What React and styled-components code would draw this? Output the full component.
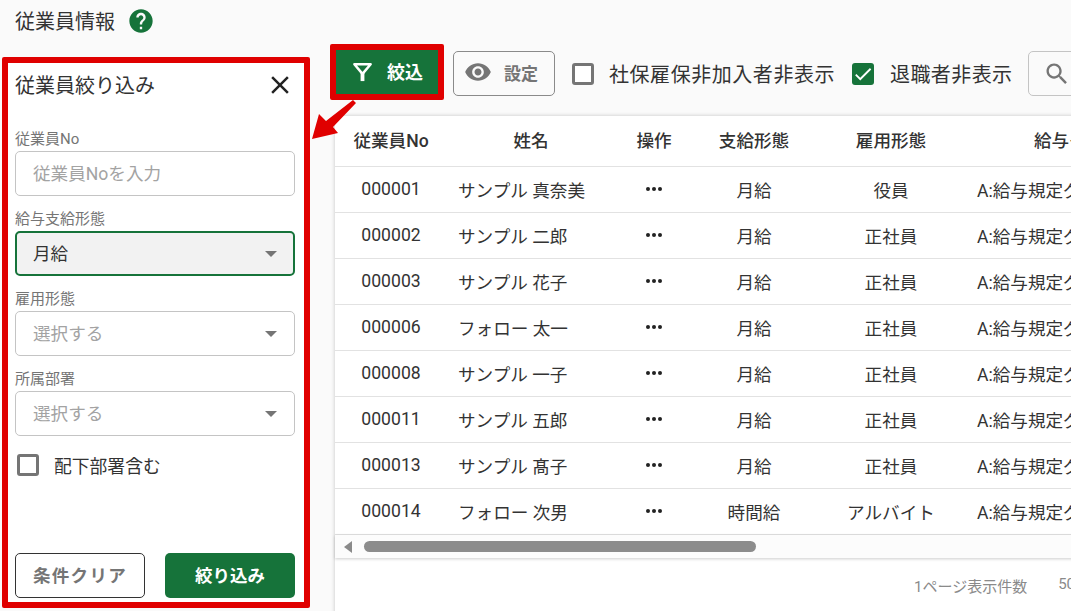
import React from "react";
import styled, { createGlobalStyle } from "styled-components";

const Global = createGlobalStyle`
  html, body { margin: 0; padding: 0; height: 611px; overflow: hidden; background: #fafafa; }
  * { box-sizing: border-box; }
  body { font-family: Roboto, "Noto Sans CJK JP", sans-serif; color: #333; }
`;

const GREEN = "#16733a";
const RED = "#e00000";

const Page = styled.div`
  position: relative;
  width: 1071px;
  height: 611px;
  overflow: hidden;
`;
const Header = styled.header`
  height: 44px;
  padding: 0 0 3px 15px;
  display: flex;
  align-items: center;
  gap: 12px;
`;
const Title = styled.h1`
  margin: 0;
  font-size: 20px;
  font-weight: 400;
  color: #333;
`;
const HelpMark = styled.span`
  color: ${GREEN};
  display: flex;
`;
const Body = styled.div`
  display: flex;
  align-items: flex-start;
  padding-left: 2px;
  width: 1400px;
`;
const Side = styled.aside`
  width: 308px;
  height: 551px;
  margin-top: 13px;
  border: 6px solid ${RED};
  border-radius: 2px;
  background: #fff;
  padding: 0 9px 4px 7px;
  display: flex;
  flex-direction: column;
`;
const SideHead = styled.div`
  height: 46px;
  padding-bottom: 3px;
  display: flex;
  align-items: center;
  justify-content: space-between;
  margin-bottom: 17px;
`;
const SideTitle = styled.h2`
  margin: 0;
  font-size: 20px;
  font-weight: 400;
  color: #333;
`;
const Close = styled.button`
  border: 0;
  background: none;
  padding: 0;
  width: 30px;
  height: 30px;
  color: #222;
  display: flex;
`;
const Field = styled.div`
  height: 80px;
  display: flex;
  flex-direction: column;
`;
const Label = styled.label`
  height: 25px;
  padding-top: 3px;
  font-size: 15px;
  line-height: 20px;
  color: #757575;
`;
const Box = styled.div`
  height: 45px;
  border: ${(p) => (p.$active ? `2px solid ${GREEN}` : "1px solid #c4c4c4")};
  border-radius: 5px;
  background: ${(p) => (p.$active ? "#f2f2f2" : "#fff")};
  padding: 0 ${(p) => (p.$active ? "16px" : "17px")} 2px ${(p) => (p.$active ? "16px" : "17px")};
  display: flex;
  align-items: center;
  justify-content: space-between;
  font-size: 17.6px;
  color: ${(p) => (p.$placeholder ? "#a3a3a3" : "#333")};
`;
const Caret = styled.span`
  width: 0;
  height: 0;
  margin-top: 2px;
  border-left: 6px solid transparent;
  border-right: 6px solid transparent;
  border-top: 6px solid #757575;
`;
const CheckRow = styled.label`
  display: flex;
  align-items: center;
  gap: ${(p) => p.$gap || 15}px;
  font-size: ${(p) => p.$size || 17.8}px;
  letter-spacing: ${(p) => p.$ls || 0}px;
  color: #333;
  white-space: nowrap;
`;
const Check = styled.span`
  width: 22px;
  height: 22px;
  flex: none;
  border-radius: 3px;
  border: ${(p) => (p.$on ? "0" : "3px solid #757575")};
  background: ${(p) => (p.$on ? GREEN : "#fff")};
  color: #fff;
  display: flex;
`;
const SideCheck = styled.div`
  margin-top: 6px;
  padding-left: 2px;
`;
const SideFoot = styled.div`
  margin-top: auto;
  display: flex;
  justify-content: space-between;
`;
const FootButton = styled.button`
  width: 130px;
  height: 45px;
  border-radius: 5px;
  border: ${(p) => (p.$primary ? "0" : "1px solid #333")};
  background: ${(p) => (p.$primary ? GREEN : "#fff")};
  color: ${(p) => (p.$primary ? "#fff" : "#757575")};
  font: 700 17.5px Roboto, "Noto Sans CJK JP", sans-serif;
  letter-spacing: ${(p) => (p.$primary ? 0 : 1.3)}px;
  padding: 0 0 2px;
`;
const Main = styled.main`
  flex: 1;
  margin-left: 20px;
  min-width: 0;
`;
const Toolbar = styled.div`
  height: 72px;
  display: flex;
  align-items: flex-start;
`;
const Highlight = styled.div`
  width: 114px;
  height: 56px;
  border: 6px solid ${RED};
  border-radius: 2px;
  margin-right: 9px;
`;
const FilterButton = styled.button`
  width: 102px;
  height: 44px;
  border: 0;
  background: ${GREEN};
  color: #fff;
  font: 700 18px Roboto, "Noto Sans CJK JP", sans-serif;
  display: flex;
  align-items: center;
  justify-content: center;
  gap: 13px;
  padding: 0 0 2px;
`;
const SettingButton = styled.button`
  width: 102px;
  height: 45px;
  margin: 7px 17px 0 0;
  border: 1px solid #8a8a8a;
  border-radius: 5px;
  background: #fafafa;
  color: #757575;
  font: 700 17px Roboto, "Noto Sans CJK JP", sans-serif;
  display: flex;
  align-items: center;
  justify-content: center;
  gap: 12px;
  padding: 0 6px 3px 0;
`;
const ToolCheck = styled.div`
  margin: 7px 17px 0 0;
  height: 45px;
  display: flex;
  align-items: center;
`;
const SearchBox = styled.div`
  width: 200px;
  height: 45px;
  margin: 7px 0 0 -1px;
  border: 1px solid #c4c4c4;
  border-radius: 5px;
  padding-left: 14px;
  background: #fafafa;
  color: #757575;
  display: flex;
  align-items: center;
`;
const Card = styled.section`
  margin-left: 5px;
  background: #fff;
  box-shadow: 0 0 4px rgba(0, 0, 0, 0.22);
  height: 520px;
`;
const Table = styled.div`
  display: grid;
  grid-template-columns: 112px 168px 78px 122px 152px 300px;
`;
const Cell = styled.div`
  height: ${(p) => (p.$head ? 51 : 46)}px;
  border-bottom: 1px solid #e2e2e2;
  display: flex;
  align-items: center;
  justify-content: ${(p) => (p.$left ? "flex-start" : "center")};
  padding: 0 0 ${(p) => (p.$head ? 3 : 1)}px ${(p) => p.$pad || 0}px;
  font-size: 17.6px;
  font-weight: ${(p) => (p.$head ? 500 : 400)};
  color: #333;
  white-space: nowrap;
  overflow: hidden;
`;
const Dots = styled.span`
  display: flex;
  gap: 2px;
  & i { width: 4px; height: 4px; border-radius: 50%; background: #222; display: block; }
`;
const ScrollTrack = styled.div`
  height: 23px;
  display: flex;
  align-items: center;
  padding: 0 0 0 9px;
  background: #fcfcfc;
  box-shadow: 0 1px 3px rgba(0, 0, 0, 0.2);
  position: relative;
`;
const ScrollArrow = styled.span`
  width: 0;
  height: 0;
  border-top: 6px solid transparent;
  border-bottom: 6px solid transparent;
  border-right: 8px solid #8a8a8a;
  margin-right: 12px;
`;
const ScrollThumb = styled.span`
  width: 392px;
  height: 11px;
  border-radius: 6px;
  background: #8c8c8c;
`;
const Footer = styled.div`
  height: 60px;
  padding: 17px 0 0 579px;
  display: flex;
  gap: 31px;
  font-size: 15px;
  color: #8a8a8a;
  white-space: nowrap;
`;
const Arrow = styled.svg`
  position: absolute;
  left: 310px;
  top: 98px;
  width: 48px;
  height: 44px;
`;

const Icon = ({ d, size = 24, fill = "currentColor" }) => (
  <svg width={size} height={size} viewBox="0 0 24 24" fill={fill}><path d={d} /></svg>
);

const rows = [
  ["000001", "サンプル 真奈美", "月給", "役員"],
  ["000002", "サンプル 二郎", "月給", "正社員"],
  ["000003", "サンプル 花子", "月給", "正社員"],
  ["000006", "フォロー 太一", "月給", "正社員"],
  ["000008", "サンプル 一子", "月給", "正社員"],
  ["000011", "サンプル 五郎", "月給", "正社員"],
  ["000013", "サンプル 髙子", "月給", "正社員"],
  ["000014", "フォロー 次男", "時間給", "アルバイト"],
];

const HELP = "M12 2C6.48 2 2 6.48 2 12s4.48 10 10 10 10-4.48 10-10S17.52 2 12 2zm1 17h-2v-2h2v2zm2.07-7.75l-.9.92C13.45 12.9 13 13.5 13 15h-2v-.5c0-1.1.45-2.1 1.17-2.83l1.24-1.26c.37-.36.59-.86.59-1.41 0-1.1-.9-2-2-2s-2 .9-2 2H8c0-2.21 1.79-4 4-4s4 1.79 4 4c0 .88-.36 1.68-.93 2.25z";
const CLOSE = "M19 6.41L17.59 5 12 10.59 6.41 5 5 6.41 10.59 12 5 17.59 6.41 19 12 13.41 17.59 19 19 17.59 13.41 12z";
const EYE = "M12 4.5C7 4.5 2.73 7.61 1 12c1.73 4.39 6 7.5 11 7.5s9.27-3.11 11-7.5c-1.73-4.39-6-7.5-11-7.5zM12 17c-2.76 0-5-2.24-5-5s2.24-5 5-5 5 2.24 5 5-2.24 5-5 5zm0-8c-1.66 0-3 1.34-3 3s1.34 3 3 3 3-1.34 3-3-1.34-3-3-3z";
const SEARCH = "M15.5 14h-.79l-.28-.27C15.41 12.59 16 11.11 16 9.5 16 5.91 13.09 3 9.5 3S3 5.91 3 9.5 5.91 16 9.5 16c1.61 0 3.09-.59 4.23-1.57l.27.28v.79l5 4.99L20.49 19l-4.99-5zm-6 0C7.01 14 5 11.99 5 9.5S7.01 5 9.5 5 14 7.01 14 9.5 11.99 14 9.5 14z";
const TICK = "M9 16.17L4.83 12l-1.42 1.41L9 19 21 7l-1.41-1.41z";

export default function App() {
  return (
    <Page>
      <Global />
      <Header>
        <Title>従業員情報</Title>
        <HelpMark><Icon d={HELP} size={28} /></HelpMark>
      </Header>
      <Body>
        <Side>
          <SideHead>
            <SideTitle>従業員絞り込み</SideTitle>
            <Close aria-label="閉じる"><Icon d={CLOSE} size={30} /></Close>
          </SideHead>
          <Field>
            <Label>従業員No</Label>
            <Box $placeholder>従業員Noを入力</Box>
          </Field>
          <Field>
            <Label>給与支給形態</Label>
            <Box $active>月給<Caret /></Box>
          </Field>
          <Field>
            <Label>雇用形態</Label>
            <Box $placeholder>選択する<Caret /></Box>
          </Field>
          <Field>
            <Label>所属部署</Label>
            <Box $placeholder>選択する<Caret /></Box>
          </Field>
          <SideCheck>
            <CheckRow $gap={15}><Check />配下部署含む</CheckRow>
          </SideCheck>
          <SideFoot>
            <FootButton>条件クリア</FootButton>
            <FootButton $primary>絞り込み</FootButton>
          </SideFoot>
        </Side>
        <Main>
          <Toolbar>
            <Highlight>
              <FilterButton>
                <svg width="23" height="23" viewBox="0 0 24 24" fill="none" stroke="currentColor" strokeWidth="2.6" strokeLinejoin="round">
                  <path d="M3.5 4.5h17L12 14.5z" />
                  <path d="M12 13v9" strokeWidth="4" />
                </svg>
                絞込
              </FilterButton>
            </Highlight>
            <SettingButton><Icon d={EYE} size={28} />設定</SettingButton>
            <ToolCheck><CheckRow $size={20} $ls={0.55} $gap={15}><Check />社保雇保非加入者非表示</CheckRow></ToolCheck>
            <ToolCheck><CheckRow $size={20} $ls={0.4} $gap={16}><Check $on><Icon d={TICK} size={22} /></Check>退職者非表示</CheckRow></ToolCheck>
            <SearchBox><Icon d={SEARCH} size={28} /></SearchBox>
          </Toolbar>
          <Card>
            <Table>
              <Cell $head>従業員No</Cell>
              <Cell $head>姓名</Cell>
              <Cell $head>操作</Cell>
              <Cell $head>支給形態</Cell>
              <Cell $head>雇用形態</Cell>
              <Cell $head $left $pad={67}>給与グループ</Cell>
              {rows.map((r) => (
                <React.Fragment key={r[0]}>
                  <Cell>{r[0]}</Cell>
                  <Cell $left $pad={11}>{r[1]}</Cell>
                  <Cell><Dots><i /><i /><i /></Dots></Cell>
                  <Cell>{r[2]}</Cell>
                  <Cell>{r[3]}</Cell>
                  <Cell $left $pad={10}>A:給与規定グループ</Cell>
                </React.Fragment>
              ))}
            </Table>
            <ScrollTrack><ScrollArrow /><ScrollThumb /></ScrollTrack>
            <Footer><span>1ページ表示件数</span><span>50</span></Footer>
          </Card>
        </Main>
      </Body>
      <Arrow viewBox="0 0 48 44">
        <path d="M43 2 L46 5 L23 29 L28 35 L2 41 L9 16 L16 23 Z" fill={RED} />
      </Arrow>
    </Page>
  );
}
